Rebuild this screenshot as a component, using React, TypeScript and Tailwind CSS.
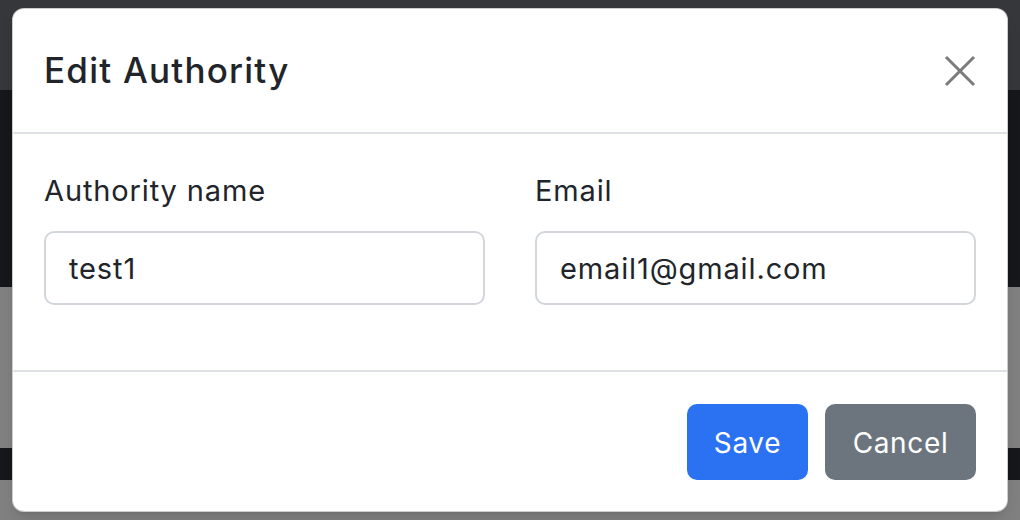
import React from "react";

function CloseIcon() {
  return (
    <svg width="32" height="32" viewBox="0 0 32 32" fill="none">
      <path d="M2 2L30 30M30 2L2 30" stroke="#7b7b7b" strokeWidth="3" strokeLinecap="butt" />
    </svg>
  );
}

export default function App() {
  return (
    <div className="relative w-[1020px] h-[520px] overflow-hidden font-['Inter',sans-serif] text-[#212529]">
      {/* page behind the backdrop */}
      <div className="flex flex-col h-full">
        <div className="h-[90px] bg-[#35373a]" />
        <div className="h-[197px] bg-[#16171b]" />
        <div className="h-[161px] bg-[#808080]" />
        <div className="h-[32px] bg-[#16171b]" />
        <div className="flex-1 bg-[#808080]" />
      </div>

      {/* modal */}
      <div className="absolute left-[12px] top-[8px] w-[996px] h-[504px] bg-white rounded-[12px] border border-black/20 shadow-lg flex flex-col">
        <div className="h-[125px] shrink-0 flex items-center justify-between pl-[31px] pr-[31px] border-b-2 border-[#dee2e6]">
          <h5 className="text-[35px] font-medium leading-[1.5] tracking-[0.035em]">Edit Authority</h5>
          <button className="w-[32px] h-[32px] flex items-center justify-center">
            <CloseIcon />
          </button>
        </div>

        <div className="grid grid-cols-2 gap-[50px] px-[31px] pt-[36px] pb-[65px] border-b-2 border-[#dee2e6] text-[29px] tracking-[0.03em]">
          <div className="flex flex-col">
            <label className="leading-[42px] mb-[19px]">Authority name</label>
            <div className="h-[74px] border-2 border-[#d3d7dc] rounded-[10px] flex items-center pl-[23px] pr-[23px] pt-[2px]">
              test1
            </div>
          </div>
          <div className="flex flex-col">
            <label className="leading-[42px] mb-[19px]">Email</label>
            <div className="h-[74px] border-2 border-[#d3d7dc] rounded-[10px] flex items-center pl-[23px] pr-[23px] pt-[2px]">
              email1@gmail.com
            </div>
          </div>
        </div>

        <div className="flex-1 flex items-center justify-end gap-[17px] px-[31px] tracking-[0.04em]">
          <button className="w-[121px] h-[76px] pt-[3px] rounded-[10px] bg-[#2b72f2] text-white text-[28px]">Save</button>
          <button className="w-[151px] h-[76px] pt-[3px] rounded-[10px] bg-[#6c757d] text-white text-[28px]">Cancel</button>
        </div>
      </div>
    </div>
  );
}
